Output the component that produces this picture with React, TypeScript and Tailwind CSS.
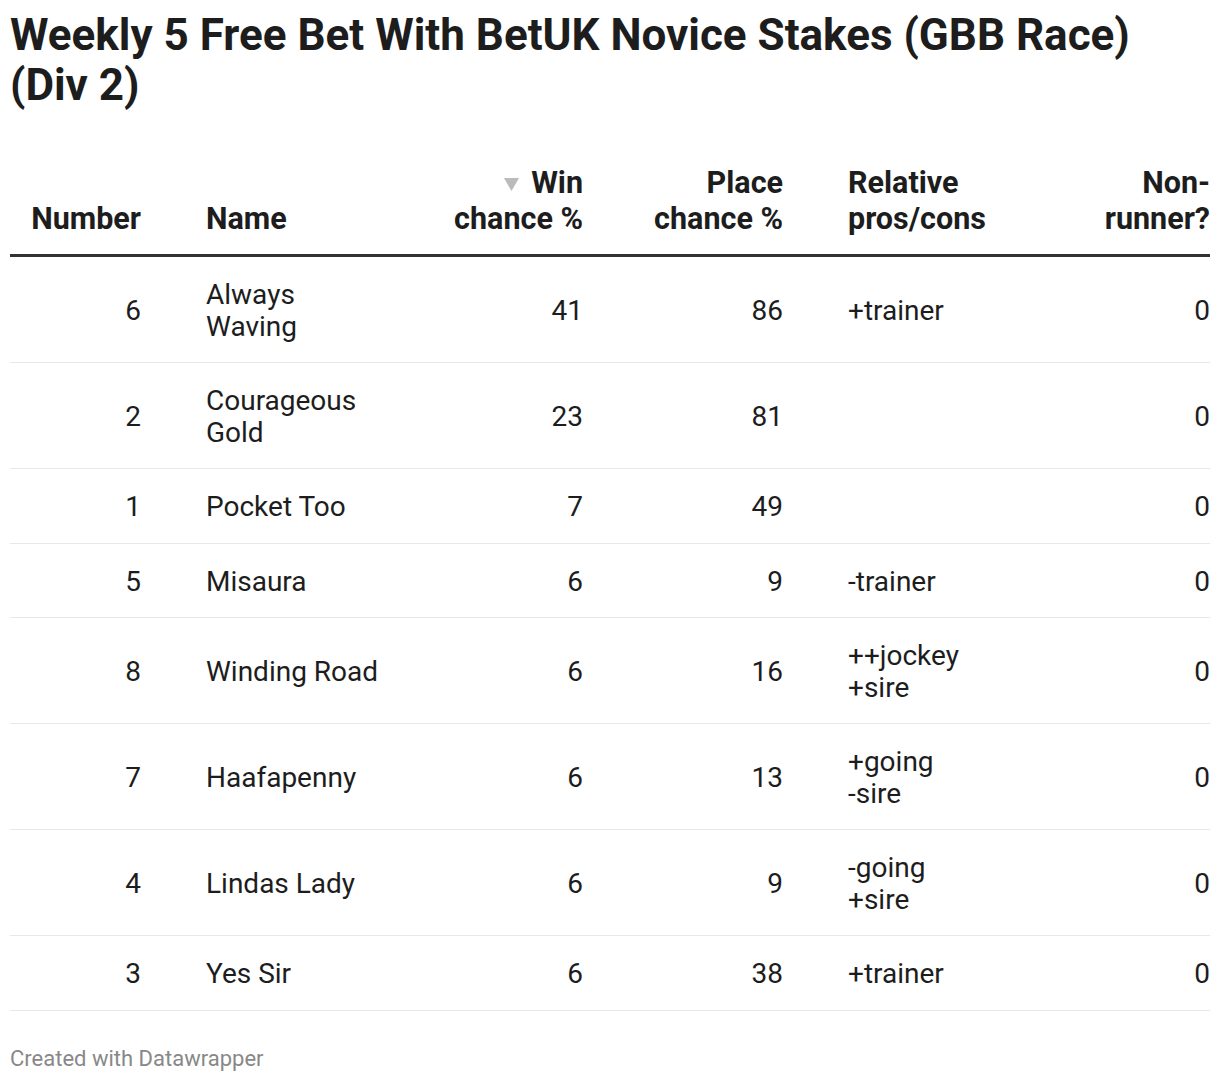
import React from "react";

type Row = {
  number: number;
  name: string[];
  win: number;
  place: number;
  pros: string[];
  nonRunner: number;
};

const rows: Row[] = [
  { number: 6, name: ["Always", "Waving"], win: 41, place: 86, pros: ["+trainer"], nonRunner: 0 },
  { number: 2, name: ["Courageous", "Gold"], win: 23, place: 81, pros: [], nonRunner: 0 },
  { number: 1, name: ["Pocket Too"], win: 7, place: 49, pros: [], nonRunner: 0 },
  { number: 5, name: ["Misaura"], win: 6, place: 9, pros: ["-trainer"], nonRunner: 0 },
  { number: 8, name: ["Winding Road"], win: 6, place: 16, pros: ["++jockey", "+sire"], nonRunner: 0 },
  { number: 7, name: ["Haafapenny"], win: 6, place: 13, pros: ["+going", "-sire"], nonRunner: 0 },
  { number: 4, name: ["Lindas Lady"], win: 6, place: 9, pros: ["-going", "+sire"], nonRunner: 0 },
  { number: 3, name: ["Yes Sir"], win: 6, place: 38, pros: ["+trainer"], nonRunner: 0 },
];

function Lines({ lines }: { lines: string[] }) {
  return (
    <>
      {lines.map((l, i) => (
        <div key={i}>{l}</div>
      ))}
    </>
  );
}

export default function App() {
  return (
    <div
      className="w-[1220px] bg-white px-[10px] pt-[10px] text-[#1d1d1d]"
      style={{ fontFamily: "Roboto, 'Liberation Sans', sans-serif" }}
    >
      <h1 className="text-[44px] font-bold leading-[50px]">
        Weekly 5 Free Bet With BetUK Novice Stakes (GBB Race)
        <br />
        (Div 2)
      </h1>

      <table className="mt-[55px] w-[1200px] table-fixed border-collapse">
        <colgroup>
          <col className="w-[176px]" />
          <col className="w-[217px]" />
          <col className="w-[200px]" />
          <col className="w-[200px]" />
          <col className="w-[225px]" />
          <col className="w-[182px]" />
        </colgroup>
        <thead>
          <tr className="border-b-[3px] border-[#333333] align-bottom text-[30.5px] font-bold leading-[36px]">
            <th className="pb-[17px] pr-[45px] text-right font-bold">Number</th>
            <th className="pb-[17px] pl-[20px] text-left font-bold">Name</th>
            <th className="pb-[17px] pr-[20px] text-right font-bold">
              <div className="flex items-center justify-end gap-[12px]">
                <svg width="15" height="13" viewBox="0 0 15 13" className="mt-[2px]">
                  <polygon points="0,0 15,0 7.5,13" fill="#bbbbbb" />
                </svg>
                <span>Win</span>
              </div>
              <div>chance %</div>
            </th>
            <th className="pb-[17px] pr-[20px] text-right font-bold">
              <div>Place</div>
              <div>chance %</div>
            </th>
            <th className="pb-[17px] pl-[45px] text-left font-bold">
              <div>Relative</div>
              <div>pros/cons</div>
            </th>
            <th className="pb-[17px] text-right font-bold">
              <div>Non-</div>
              <div>runner?</div>
            </th>
          </tr>
        </thead>
        <tbody className="text-[28px] leading-[31.5px]">
          {rows.map((r, i) => (
            <tr key={i} className="border-b border-[#e8e8e8] align-middle">
              <td className="pb-[20px] pt-[22px] pr-[45px] text-right">{r.number}</td>
              <td className="pb-[20px] pt-[22px] pl-[20px] text-left">
                <Lines lines={r.name} />
              </td>
              <td className="pb-[20px] pt-[22px] pr-[20px] text-right">{r.win}</td>
              <td className="pb-[20px] pt-[22px] pr-[20px] text-right">{r.place}</td>
              <td className="pb-[20px] pt-[22px] pl-[45px] text-left">
                <Lines lines={r.pros} />
              </td>
              <td className="pb-[20px] pt-[22px] text-right">{r.nonRunner}</td>
            </tr>
          ))}
        </tbody>
      </table>

      <div className="pb-[10px] pt-[36px] text-[22px] leading-[24px] text-[#888888]">
        Created with Datawrapper
      </div>
    </div>
  );
}
